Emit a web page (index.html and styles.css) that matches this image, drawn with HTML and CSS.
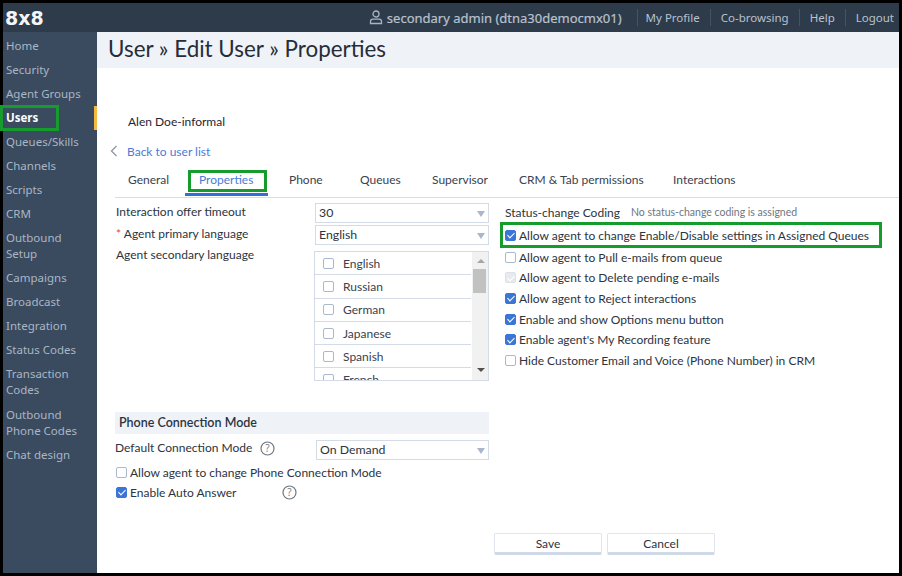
FILE: index.html
```html
<!DOCTYPE html>
<html lang="en">
<head>
  <meta charset="UTF-8" />
  <title>User - Edit User - Properties</title>
  <link rel="stylesheet" href="styles.css">
</head>
<body>
  <div class="frame">
    <header class="topbar">
      <div class="logo">8x8</div>
      <div class="top-right">
        <svg class="user-icon" width="14" height="15" viewBox="0 0 14 15" fill="none" stroke="#a9b4c1" stroke-width="1.3"><circle cx="7" cy="4" r="3"/><path d="M1.5 13.5v-2c0-1.5 1-2.3 2.5-2.3h6c1.500 0 2.500.8 2.500 2.300v2z"/></svg>
        <span class="account">secondary admin (dtna30democmx01)</span>
        <a class="top-link">My Profile</a>
        <a class="top-link">Co-browsing</a>
        <a class="top-link">Help</a>
        <a class="top-link">Logout</a>
      </div>
    </header>
    <div class="body-row">
      <nav class="sidebar">
        <a>Home</a>
        <a>Security</a>
        <a>Agent Groups</a>
        <a class="current">Users<span class="mark mark-users"></span></a>
        <a>Queues/Skills</a>
        <a>Channels</a>
        <a>Scripts</a>
        <a>CRM</a>
        <a>Outbound<br>Setup</a>
        <a>Campaigns</a>
        <a>Broadcast</a>
        <a>Integration</a>
        <a>Status Codes</a>
        <a>Transaction<br>Codes</a>
        <a>Outbound<br>Phone Codes</a>
        <a>Chat design</a>
      </nav>
      <main class="content">
        <h1 class="page-title">User » Edit User » Properties</h1>
        <div class="user-name">Alen Doe-informal</div>
        <div class="back-row">
          <svg width="8" height="12" viewBox="0 0 8 12" fill="none" stroke="#8d97a5" stroke-width="1.300"><path d="M6.500 1 1.500 6l5 5"/></svg>
          <a class="back-link">Back to user list</a>
        </div>
        <div class="tabs">
          <a class="tab tab-general">General</a>
          <a class="tab tab-props active">Properties<span class="mark mark-tab"></span></a>
          <a class="tab tab-phone">Phone</a>
          <a class="tab tab-queues">Queues</a>
          <a class="tab tab-super">Supervisor</a>
          <a class="tab tab-crm">CRM &amp; Tab permissions</a>
          <a class="tab">Interactions</a>
        </div>
        <div class="form-grid">
          <section class="left-col">
            <div class="field">
              <label>Interaction offer timeout</label>
              <div class="select">30<i class="caret"></i></div>
            </div>
            <div class="field">
              <label><span class="req">*</span> Agent primary language</label>
              <div class="select">English<i class="caret"></i></div>
            </div>
            <div class="field field-list">
              <label>Agent secondary language</label>
              <div class="listbox">
                <div class="list-items">
                  <div class="list-row"><i class="box"></i>English</div>
                  <div class="list-row"><i class="box"></i>Russian</div>
                  <div class="list-row"><i class="box"></i>German</div>
                  <div class="list-row"><i class="box"></i>Japanese</div>
                  <div class="list-row"><i class="box"></i>Spanish</div>
                  <div class="list-row"><i class="box"></i>French</div>
                </div>
                <div class="scroll">
                  <i class="arrow-up"></i>
                  <i class="thumb"></i>
                  <i class="arrow-down"></i>
                </div>
              </div>
            </div>
            <h2 class="band">Phone Connection Mode</h2>
            <div class="field field-mode">
              <label>Default Connection Mode <svg class="help help-mode" width="15" height="15" viewBox="0 0 15 15"><circle cx="7.500" cy="7.500" r="6.500" fill="none" stroke="#6f7782" stroke-width="1.200"/><text x="7.500" y="11" text-anchor="middle" font-size="10" fill="#6f7782" font-family="Open Sans">?</text></svg></label>
              <div class="select">On Demand<i class="caret"></i></div>
            </div>
            <div class="check check-tight"><i class="box"></i>Allow agent to change Phone Connection Mode</div>
            <div class="check check-tight"><i class="box on"></i>Enable Auto Answer<svg class="help help-auto" width="15" height="15" viewBox="0 0 15 15"><circle cx="7.500" cy="7.500" r="6.500" fill="none" stroke="#6f7782" stroke-width="1.200"/><text x="7.500" y="11" text-anchor="middle" font-size="10" fill="#6f7782" font-family="Open Sans">?</text></svg></div>
          </section>
          <section class="right-col">
            <div class="status-row"><span>Status-change Coding</span><small>No status-change coding is assigned</small></div>
            <div class="check check-first"><i class="box on"></i>Allow agent to change Enable/Disable settings in Assigned Queues<span class="mark mark-check"></span></div>
            <div class="check"><i class="box"></i>Allow agent to Pull e-mails from queue</div>
            <div class="check"><i class="box grey"></i>Allow agent to Delete pending e-mails</div>
            <div class="check"><i class="box on"></i>Allow agent to Reject interactions</div>
            <div class="check"><i class="box on"></i>Enable and show Options menu button</div>
            <div class="check"><i class="box on"></i>Enable agent's My Recording feature</div>
            <div class="check"><i class="box"></i>Hide Customer Email and Voice (Phone Number) in CRM</div>
          </section>
        </div>
        <div class="actions">
          <button class="btn">Save</button>
          <button class="btn">Cancel</button>
        </div>
      </main>
    </div>
  </div>
</body>
</html>
```

FILE: styles.css
```css
html, body {
  margin: 0;
  padding: 0;
  height: 100%;
  background: #000;
  overflow: hidden;
}

* {
  box-sizing: border-box;
}

.frame {
  height: 576px;
  padding: 3px;
  display: flex;
  flex-direction: column;
  font-family: Lato, "Open Sans", sans-serif;
  font-size: 12px;
  color: #2c3440;
}

.topbar {
  height: 29px;
  flex: none;
  background: #2e3b4b;
  display: flex;
  align-items: center;
  justify-content: space-between;
  color: #b9c2cd;
}

.logo {
  font-family: "DejaVu Sans", sans-serif;
  font-weight: bold;
  font-size: 19px;
  color: #f4f5f6;
  padding-left: 2px;
}

.top-right {
  display: flex;
  align-items: center;
  font-family: "Noto Sans", sans-serif;
}

.user-icon {
  margin-right: 4px;
}

.account {
  font-size: 13px;
  margin-right: 15px;
  -webkit-text-stroke: 0.2px #b9c2cd;
}

.top-link {
  font-size: 11.500px;
  padding: 0 10px;
  height: 17px;
  line-height: 17px;
  border-left: 1px solid #465364;
}

.top-link:first-of-type {
  padding-left: 8px;
}

.top-link:last-child {
  padding-right: 5px;
}

.body-row {
  flex: 1;
  display: flex;
  min-height: 0;
}

.sidebar {
  width: 94px;
  flex: none;
  background: #3a4b60;
  padding-top: 1.500px;
  color: #aab6c4;
  font-family: "Noto Sans", sans-serif;
  font-size: 11.500px;
}

.sidebar a {
  display: block;
  position: relative;
  padding: 4px 0 4px 3px;
  line-height: 16.070px;
}

.sidebar .current {
  color: #fff;
  font-weight: bold;
  border-right: 3px solid #f5b942;
}

.mark {
  position: absolute;
  border: 3px solid #169c2c;
  pointer-events: none;
}

.mark-users {
  left: -3px;
  top: -1px;
  width: 59px;
  height: 26px;
}

.content {
  flex: 1;
  background: #fff;
  min-width: 0;
}

.page-title {
  margin: 0;
  height: 36px;
  background: #eff3f8;
  padding-left: 11px;
  font-weight: normal;
  font-size: 22.400px;
  line-height: 34px;
  color: #262d38;
}

.user-name {
  margin: 46px 0 0 31px;
  height: 16px;
  line-height: 16px;
  color: #1f2630;
}

.back-row {
  display: flex;
  align-items: center;
  gap: 9px;
  margin: 13px 0 0 13px;
  height: 16px;
}

.back-link {
  color: #4a7bd8;
}

.tabs {
  position: relative;
  display: flex;
  height: 34px;
  margin: 5px 0 0 18px;
  padding-left: 13px;
  padding-top: 8px;
  border-bottom: 1px solid #d6dde7;
  color: #39424f;
}

.tab {
  position: relative;
  line-height: 16px;
}

.tab-general { width: 71px; }
.tab-props { width: 90px; }
.tab-phone { width: 71px; }
.tab-queues { width: 72px; }
.tab-super { width: 87px; }
.tab-crm { width: 154px; }

.tab.active {
  color: #4a7bd8;
}

.tab.active::after {
  content: "";
  position: absolute;
  left: -14px;
  top: 21px;
  width: 83px;
  height: 3px;
  background: #2f6fd6;
}

.mark-tab {
  left: -11px;
  top: -2px;
  width: 79px;
  height: 22px;
}

.form-grid {
  display: flex;
  padding: 0 0 0 18px;
}

.left-col {
  width: 375px;
  flex: none;
  padding-top: 5px;
}

.field {
  display: flex;
  margin-bottom: 2px;
}

.field label {
  width: 200px;
  flex: none;
  padding-left: 1px;
  line-height: 18px;
}

.req {
  color: #e2473f;
}

.select {
  position: relative;
  width: 174px;
  height: 20px;
  border: 1px solid #d3dbe6;
  padding-left: 3px;
  line-height: 18px;
  font-size: 12.300px;
  color: #2c3440;
}

.caret {
  position: absolute;
  right: 3px;
  top: 7px;
  border-left: 4px solid transparent;
  border-right: 4px solid transparent;
  border-top: 6px solid #a9b7cc;
}

.field-list {
  margin-top: 6px;
  margin-bottom: 0;
}

.field-list label {
  width: 199px;
  margin-top: -5px;
}

.listbox {
  width: 175px;
  height: 130px;
  border: 1px solid #d3dbe6;
  display: flex;
  overflow: hidden;
}

.list-items {
  width: 156px;
  flex: none;
}

.list-row {
  height: 23.300px;
  display: flex;
  align-items: center;
  border-bottom: 1px solid #d3dbe6;
  padding-left: 8px;
  color: #39424f;
}

.list-row .box {
  margin-right: 9px;
}

.scroll {
  flex: 1;
  background: #f1f1f1;
  position: relative;
  margin-left: 1px;
}

.arrow-up, .arrow-down {
  position: absolute;
  left: 5px;
  border-left: 4px solid transparent;
  border-right: 4px solid transparent;
}

.arrow-up {
  top: 7px;
  border-bottom: 4px solid #a6a6a6;
}

.arrow-down {
  bottom: 8px;
  border-top: 4px solid #505050;
}

.thumb {
  position: absolute;
  left: 1px;
  top: 17px;
  width: 13px;
  height: 24px;
  background: #c1c1c1;
}

.box {
  display: inline-block;
  position: relative;
  flex: none;
  width: 11px;
  height: 11px;
  border: 1px solid #aab7cd;
  border-radius: 2px;
  background: #fff;
  margin-right: 3px;
}

.box.on, .box.grey {
  background: #3b76d6;
  border-color: #3b76d6;
}

.box.grey {
  background: #e6e9ee;
  border-color: #dde1e7;
}

.box.on::after, .box.grey::after {
  content: "";
  position: absolute;
  left: 2.500px;
  top: 0.500px;
  width: 3px;
  height: 6px;
  border: solid #fff;
  border-width: 0 1.500px 1.500px 0;
  transform: rotate(45deg);
}

.band {
  margin: 31px 0 6px 0;
  height: 22px;
  background: #eff3f8;
  font-size: 12.500px;
  font-weight: 600;
  line-height: 22px;
  padding-left: 4px;
  color: #2c3440;
  width: 374px;
}

.field-mode {
  margin-bottom: 0;
  height: 22px;
  position: relative;
  left: -1px;
}

.field-mode .select {
  margin-left: 2px;
  height: 20px;
  line-height: 17px;
}

.field-mode label {
  display: flex;
  align-items: center;
  height: 16px;
}

.help {
  flex: none;
}

.help-mode {
  margin-left: 8px;
}

.help-auto {
  margin-left: 46px;
}

.check {
  display: flex;
  align-items: center;
  position: relative;
  height: 20.600px;
  color: #2c3440;
}

.check-tight {
  height: 20px;
  padding-left: 1px;
}

.right-col {
  padding: 4px 0 0 15px;
  flex: 1;
}

.status-row {
  display: flex;
  align-items: center;
  gap: 11px;
  height: 20px;
}

.status-row small {
  font-size: 10.500px;
  color: #6d7683;
}

.check-first {
  height: 26px;
  margin-bottom: -1px;
}

.mark-check {
  left: -5px;
  top: 0;
  width: 382px;
  height: 26px;
}

.actions {
  display: flex;
  gap: 5px;
  padding-left: 397px;
  margin-top: 31px;
}

.btn {
  width: 108px;
  height: 22px;
  background: #fff;
  border: 1px solid #dfe5ee;
  border-bottom: 3px solid #cfd9e8;
  border-radius: 2px;
  font: inherit;
  color: #2c3440;
  padding: 0;
}
```
